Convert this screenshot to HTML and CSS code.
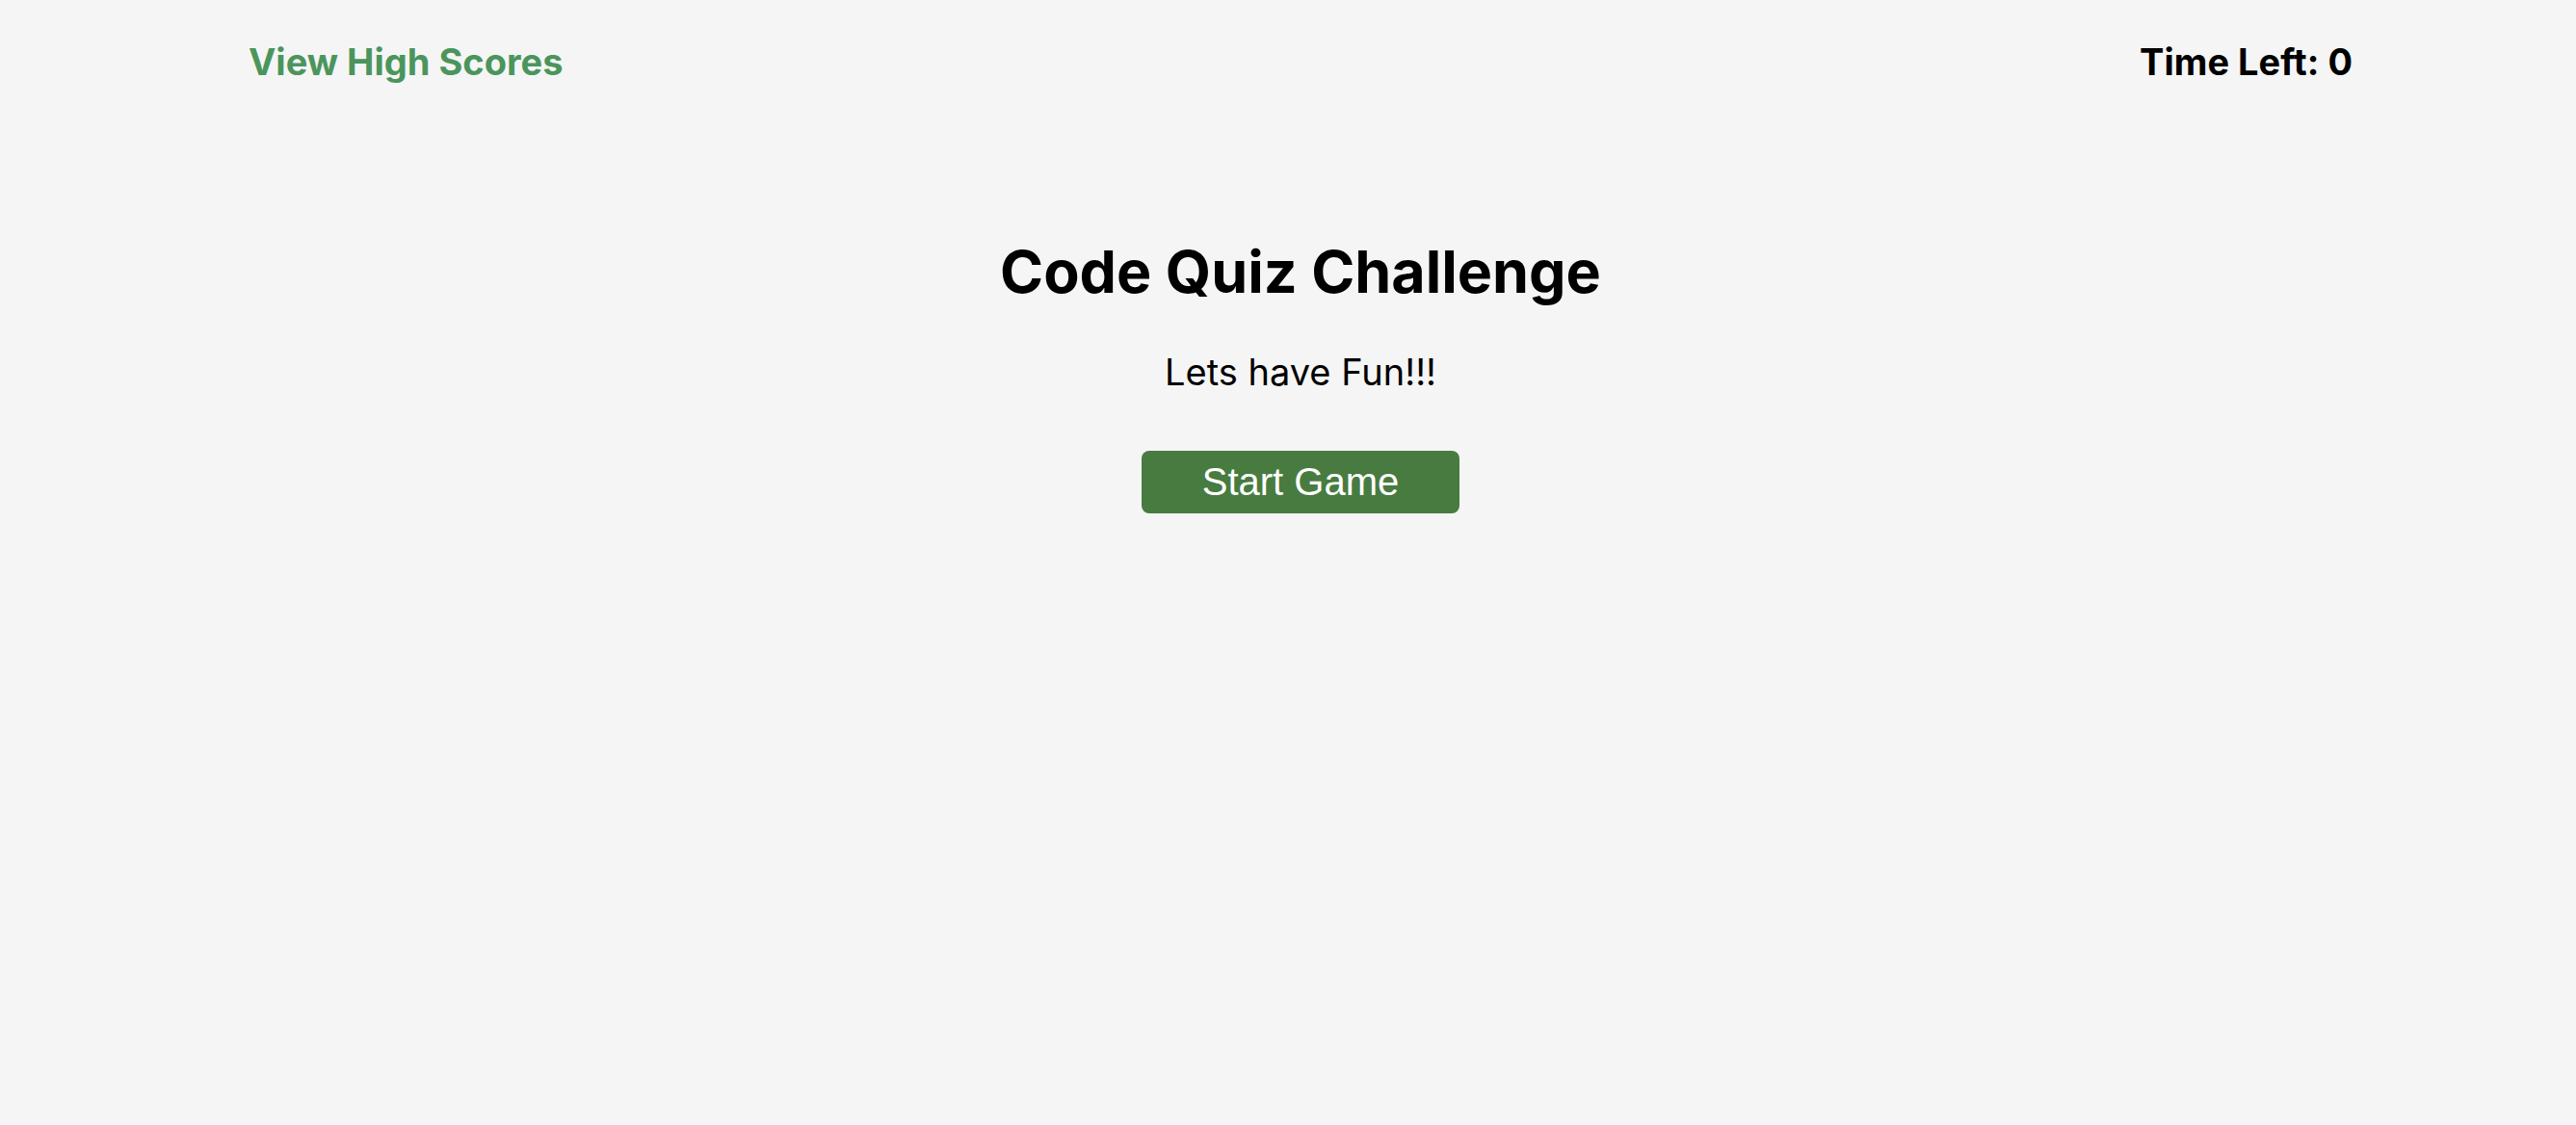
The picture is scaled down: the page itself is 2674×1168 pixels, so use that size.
FILE: index.html
```html
<!DOCTYPE html>
<html lang="en">
<head>
<meta charset="utf-8">
<title>Code Quiz Challenge</title>
<link rel="stylesheet" href="styles.css">
</head>
<body>
<header class="topbar">
<a class="scores-link" href="#scores">View High Scores</a>
<p class="timer">Time Left: <span>0</span></p>
</header>
<main class="intro">
<h1 class="title">Code Quiz Challenge</h1>
<p class="tagline">Lets have Fun!!!</p>
<button class="start" type="button">Start Game</button>
</main>
</body>
</html>
```
FILE: styles.css
```css
body {
  margin: 0;
  padding: 40px 232px 0 258px;
  background: #f5f5f5;
  color: #000;
  font-family: Inter, "Liberation Sans", sans-serif;
  font-size: 38px;
  line-height: 48px;
}

.topbar {
  display: flex;
  justify-content: space-between;
  font-weight: 700;
}

.scores-link {
  color: #4b955d;
  text-decoration: none;
}

.timer {
  margin: 0;
}

.intro {
  display: flex;
  flex-direction: column;
  align-items: center;
  padding-top: 156px;
}

.title {
  margin: 0;
  font-size: 61px;
  line-height: 76px;
  font-weight: 700;
}

.tagline {
  margin: 42px 0 58px;
}

.start {
  width: 330px;
  padding: 8px 0 9px;
  border: 0;
  border-radius: 8px;
  background: #487b40;
  color: #fff;
  font-family: "Liberation Sans", Arial, sans-serif;
  font-size: 40px;
  line-height: 48px;
}
```
